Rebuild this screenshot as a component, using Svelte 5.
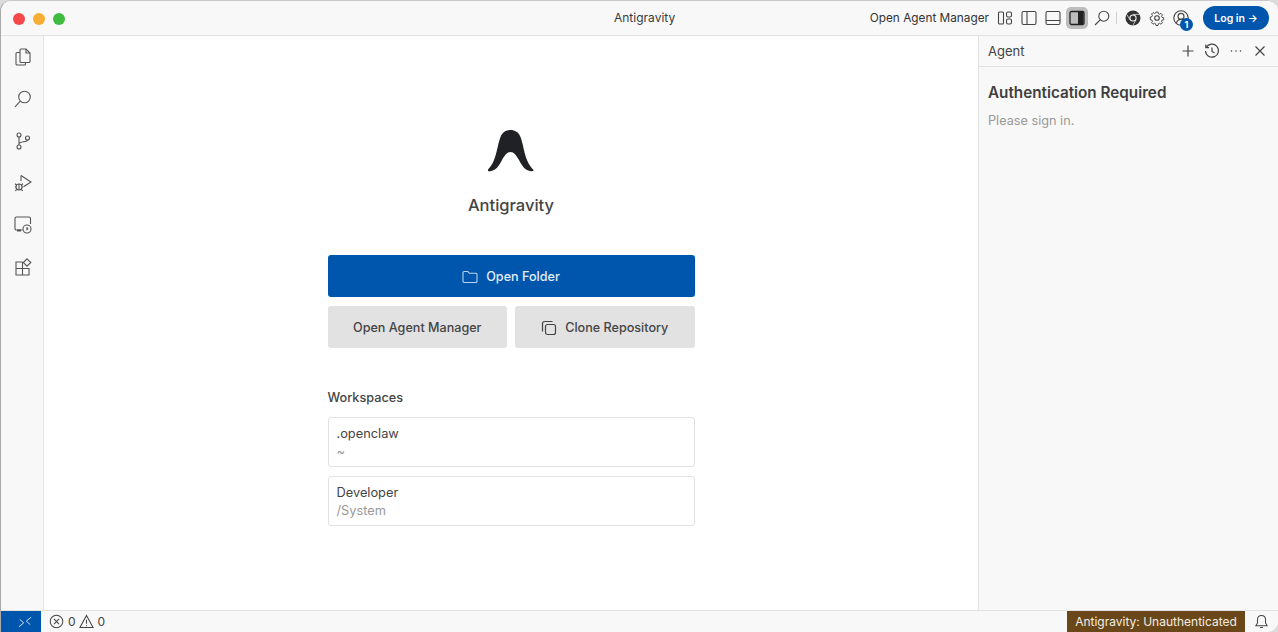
<script lang="ts">
	const workspaces = [
		{ name: '.openclaw', path: '~' },
		{ name: 'Developer', path: '/System' }
	];
</script>

<div class="window">
	<header class="titlebar">
		<div class="lights">
			<span class="light red"></span>
			<span class="light amber"></span>
			<span class="light green"></span>
		</div>
		<div class="title">Antigravity</div>
		<div class="title-actions">
			<span class="manager-link">Open Agent Manager</span>
			<svg class="tb first" viewBox="0 0 16 16"><rect x="1.5" y="2" width="5" height="12" rx="1" /><rect x="9.5" y="2" width="5" height="5" rx="1.5" /><rect x="9.5" y="9" width="5" height="5" rx="1.5" /></svg>
			<svg class="tb" viewBox="0 0 16 16"><rect x="1" y="1.5" width="14" height="13" rx="1.5" /><path d="M6 1.5v13" /></svg>
			<svg class="tb" viewBox="0 0 16 16"><rect x="1" y="1.5" width="14" height="13" rx="1.5" /><path d="M1 10.5h14" /></svg>
			<span class="tb-active">
				<svg class="tb-plain" viewBox="0 0 16 16"><rect x="1" y="1.5" width="14" height="13" rx="1.5" /><path class="solid" d="M9 2h5.5v12H9z" /></svg>
			</span>
			<svg class="tb search" viewBox="0 0 16 16"><circle cx="9.8" cy="6.2" r="5" /><path d="M6.2 9.8 1 15" /></svg>
			<span class="divider"></span>
			<svg class="tb chrome" viewBox="0 0 16 16"><circle class="ink" cx="8" cy="8" r="7.5" /><circle class="hole" cx="8" cy="8" r="3.6" /><circle class="ink" cx="8" cy="8" r="2.5" /><path class="cut" d="M8 4.4h6.6M4.9 9.8 1.6 4.2M11.1 9.8 7.8 15.4" /></svg>
			<svg class="tb gear" viewBox="0 0 16 16"><circle cx="8" cy="8" r="2.3" /><path d="M6.8 1h2.4l.4 2 1.3.6 1.8-1.1 1.7 1.7-1.1 1.8.6 1.3 2 .4v2.4l-2 .4-.6 1.3 1.1 1.8-1.7 1.7-1.8-1.1-1.3.6-.4 2H6.8l-.4-2-1.3-.6-1.8 1.1-1.7-1.7 1.1-1.8-.6-1.3-2-.4V6.8l2-.4.6-1.3-1.1-1.8 1.7-1.7 1.8 1.1 1.3-.6z" transform="translate(1.2 1.2) scale(.85)" /></svg>
			<span class="account">
				<svg class="tb-plain" viewBox="0 0 16 16"><circle cx="8" cy="8" r="7.2" /><circle cx="8" cy="6.4" r="3" /><path d="M3.4 13c.8-2.4 2.5-3.6 4.6-3.6s3.800 1.200 4.600 3.600" /></svg>
				<span class="badge">1</span>
			</span>
			<button class="login">Log in →</button>
		</div>
	</header>

	<div class="workbench">
		<nav class="activity">
			<svg viewBox="0 0 18 18"><path d="M7 1h5l4 4v8.500a1 1 0 0 1-1 1H7a1 1 0 0 1-1-1V2a1 1 0 0 1 1-1z" /><path d="M12 1v4h4" /><path d="M6 4.500H3a1 1 0 0 0-1 1V16a1 1 0 0 0 1 1h7.500a1 1 0 0 0 1-1v-1.500" /></svg>
			<svg viewBox="0 0 18 18"><circle cx="10.500" cy="7" r="5.800" /><path d="M6.300 11.200 1 16.800" /></svg>
			<svg viewBox="0 0 18 18"><circle cx="5" cy="3" r="2" /><circle cx="5" cy="15" r="2" /><circle cx="13.500" cy="6" r="2" /><path d="M5 5v8M5 12c0-3 8.500-1.500 8.500-4" /></svg>
			<svg viewBox="0 0 18 18"><path d="M7 1.500 17 8l-7.500 4.800" /><path d="M7 1.500V7" /><circle cx="5" cy="13" r="3" /><path d="M5 10v6M1 9.800l1.600 1.200M9 9.800 7.400 11M1 13h1M8 13h1M1.200 16.800 2.800 15.300M8.800 16.800 7.200 15.300" /></svg>
			<svg viewBox="0 0 18 18"><path d="M8.500 14H2.500a1.500 1.500 0 0 1-1.500-1.500v-10A1.500 1.500 0 0 1 2.500 1h12.500A1.500 1.500 0 0 1 16.500 2.500V8" /><path class="thick" d="M3 14.500h4" /><circle cx="13" cy="13" r="4" /><path d="M13 11v2.500l1.200-1" /></svg>
			<svg viewBox="0 0 18 18"><path d="M8.500 4H2v13h13v-6.500H2M8.500 4v13" /><path d="m13 .8 3.800 3.700-3.800 3.700-3.700-3.700z" /></svg>
		</nav>

		<main class="welcome">
			<svg class="logo" viewBox="0 0 46 42"><path d="M22.500 0C27 0 30.500 2 32.500 7c2.500 6 3.500 16 6.500 23 1.500 4 4 7.500 6.500 10 .5 1-1.500 1.500-3.500 1-5-1-8-5-11-11-3-5-5-8-8.500-8s-5.500 3-8.500 8c-3 6-6 10-11 11-2 .5-4 0-3.500-1C2 37.500 4.500 34 6 30c3-7 4-17 6.500-23C14.500 2 18 0 22.500 0z" /></svg>
			<h1>Antigravity</h1>

			<div class="actions">
				<button class="btn primary">
					<svg viewBox="0 0 16 16"><path d="M1 3.500A1 1 0 0 1 2 2.500h3.800l1.700 1.800H14a1 1 0 0 1 1 1V12.500a1 1 0 0 1-1 1H2a1 1 0 0 1-1-1z" /></svg>
					Open Folder
				</button>
				<div class="action-row">
					<button class="btn secondary">Open Agent Manager</button>
					<button class="btn secondary">
						<svg viewBox="0 0 16 16"><rect x="4.500" y="4.500" width="10" height="10" rx="2" /><path d="M11.500 1.500H3.500a2 2 0 0 0-2 2v8" /></svg>
						Clone Repository
					</button>
				</div>
			</div>

			<section class="workspaces">
				<h2>Workspaces</h2>
				{#each workspaces as ws}
					<div class="ws-card">
						<div class="ws-name">{ws.name}</div>
						<div class="ws-path">{ws.path}</div>
					</div>
				{/each}
			</section>
		</main>

		<aside class="agent">
			<div class="agent-head">
				<span>Agent</span>
				<div class="agent-tools">
					<svg viewBox="0 0 16 16"><path d="M8 2.500v11M2.500 8h11" /></svg>
					<svg viewBox="0 0 16 16"><path d="M2.300 4.500A6.500 6.500 0 1 1 1.500 8" /><path d="M1.800 1.500v3.200h3.200" /><path d="M8 4.500V8.500l2.600 1.500" /></svg>
					<svg viewBox="0 0 16 16"><path class="dots" d="M3.500 8h.01M8 8h.01M12.500 8h.01" /></svg>
					<svg viewBox="0 0 16 16"><path d="m3.500 3.500 9 9M12.500 3.500l-9 9" /></svg>
				</div>
			</div>
			<div class="agent-body">
				<h3>Authentication Required</h3>
				<p>Please sign in.</p>
			</div>
		</aside>
	</div>

	<footer class="statusbar">
		<div class="remote">
			<svg viewBox="0 0 16 16"><path d="M1 13.500 6.500 9 2 5M15 2.500 9.500 7l4.500 4" /></svg>
		</div>
		<div class="problems">
			<svg viewBox="0 0 16 16"><circle cx="8" cy="8" r="6.700" /><path d="m5.300 5.300 5.400 5.400M10.700 5.300l-5.400 5.400" /></svg>
			<span>0</span>
			<svg viewBox="0 0 16 16"><path d="M8 1.500 15 14.500H1z" /><path d="M8 6v4.500M8 12v1" /></svg>
			<span>0</span>
		</div>
		<div class="status-right">
			<span class="auth">Antigravity: Unauthenticated</span>
			<svg class="bell" viewBox="0 0 16 16"><path d="M8 1.500c-2.800 0-4.300 2-4.300 4.500v3.500L2 12.500h12l-1.700-3V6c0-2.500-1.500-4.500-4.300-4.500z" /><path d="M6.500 14.500h3" /></svg>
		</div>
	</footer>
</div>

<style>
	:global(body) {
		margin: 0;
		background: #dcdcdc;
		font-family: Inter, 'Liberation Sans', sans-serif;
		overflow: hidden;
	}

	svg {
		fill: none;
		stroke: #444;
		stroke-width: 1.1;
		display: block;
		flex-shrink: 0;
	}

	.window {
		width: 1278px;
		height: 632px;
		box-sizing: border-box;
		border-left: 1px solid #aaa;
		border-top: 1px solid #c8c8c8;
		border-radius: 11px 11px 11px 0;
		background: #fff;
		display: flex;
		flex-direction: column;
		overflow: hidden;
		color: #333;
	}

	.titlebar {
		height: 34px;
		flex-shrink: 0;
		background: #f8f8f8;
		border-bottom: 1px solid #e2e2e2;
		display: flex;
		align-items: center;
		position: relative;
	}

	.lights {
		display: flex;
		gap: 8px;
		padding-left: 12px;
		padding-top: 1px;
	}

	.light {
		width: 12px;
		height: 12px;
		border-radius: 50%;
	}

	.red { background: #f4484a; }
	.amber { background: #f8ae33; }
	.green { background: #3fbb3f; }

	.title {
		position: absolute;
		left: 613px;
		top: 9px;
		font-size: 12px;
		line-height: 16px;
		color: #3a3a3a;
	}

	.title-actions {
		margin-left: auto;
		display: flex;
		align-items: center;
		padding-right: 9px;
	}

	.manager-link {
		font-size: 11.8px;
		color: #333;
		margin-right: 8px;
	}

	.tb {
		width: 16px;
		height: 16px;
		margin-right: 8px;
	}

	.tb.search {
		margin-left: 6px;
		margin-right: 6px;
	}

	.tb-plain {
		width: 16px;
		height: 16px;
	}

	.tb-active {
		width: 22px;
		height: 22px;
		background: #bdbdbd;
		border-radius: 5px;
		display: flex;
		align-items: center;
		justify-content: center;
		margin-left: -3px;
	}

	.tb-active svg {
		stroke: #222;
		stroke-width: 1.3;
	}

	.solid {
		fill: #222;
		stroke: none;
	}

	.divider {
		width: 1px;
		height: 12px;
		background: #cfcfcf;
		margin-right: 8px;
	}

	.chrome .ink {
		fill: #333;
		stroke: none;
	}

	.chrome .hole {
		fill: #f8f8f8;
		stroke: none;
	}

	.chrome .cut {
		stroke: #f8f8f8;
		stroke-width: 0.7;
	}

	.chrome {
		margin-right: 8px;
	}

	.account {
		position: relative;
		width: 16px;
		height: 16px;
		margin-right: 14px;
	}

	.badge {
		position: absolute;
		right: -4px;
		bottom: -5px;
		width: 13px;
		height: 13px;
		border-radius: 50%;
		background: #0056ac;
		color: #fff;
		font-size: 9px;
		font-weight: 700;
		line-height: 13px;
		text-align: center;
	}

	.login {
		width: 66px;
		height: 24px;
		padding: 0;
		border: none;
		border-radius: 12px;
		background: #0056ac;
		color: #fff;
		font: 600 10.500px Inter, 'Liberation Sans', sans-serif;
	}

	.workbench {
		flex: 1;
		display: flex;
		min-height: 0;
	}

	.activity {
		width: 41px;
		flex-shrink: 0;
		background: #f8f8f8;
		border-right: 1px solid #e6e6e6;
		display: flex;
		flex-direction: column;
		align-items: center;
		gap: 24px;
		padding: 12px 0 0 1px;
		box-sizing: content-box;
	}

	.activity svg {
		width: 18px;
		height: 18px;
		stroke: #555;
	}

	.thick {
		stroke-width: 2;
	}

	.welcome {
		flex: 1;
		min-width: 0;
		display: flex;
		flex-direction: column;
		align-items: center;
		padding-top: 94px;
	}

	.logo {
		width: 46px;
		height: 42px;
		fill: #202124;
		stroke: none;
	}

	h1 {
		margin: 21px 0 0;
		font-size: 16.500px;
		line-height: 24px;
		font-weight: 450;
		color: #444;
	}

	.actions {
		width: 367px;
		margin-top: 38px;
		display: flex;
		flex-direction: column;
		gap: 9px;
	}

	.action-row {
		display: flex;
		gap: 8px;
	}

	.btn {
		flex: 1;
		padding: 1px 0 0;
		border: none;
		border-radius: 3px;
		display: flex;
		align-items: center;
		justify-content: center;
		gap: 8px;
		font: 450 12.600px Inter, 'Liberation Sans', sans-serif;
	}

	.btn.primary {
		height: 42px;
		flex: none;
		background: #0056ac;
		color: #e3edf7;
	}

	.btn.primary svg {
		width: 16px;
		height: 16px;
		stroke: #b9d3ea;
	}

	.btn.secondary {
		height: 42px;
		background: #e2e2e2;
		color: #444;
	}

	.btn.secondary svg {
		width: 16px;
		height: 16px;
		stroke: #444;
		stroke-width: 1.2;
	}

	.workspaces {
		width: 367px;
		margin-top: 41px;
	}

	h2 {
		margin: 0 0 11px;
		font-size: 12.700px;
		line-height: 17px;
		font-weight: 500;
		color: #444;
	}

	.ws-card {
		box-sizing: border-box;
		height: 50px;
		margin-bottom: 9px;
		padding: 8px 8px 0;
		border: 1px solid #e2e2e2;
		border-radius: 3px;
		background: #fff;
	}

	.ws-name {
		font-size: 12.800px;
		line-height: 16px;
		color: #444;
	}

	.ws-path {
		margin-top: 2px;
		font-size: 12.800px;
		line-height: 16px;
		color: #999;
	}

	.agent {
		width: 299px;
		flex-shrink: 0;
		background: #f8f8f8;
		border-left: 1px solid #e2e2e2;
	}

	.agent-head {
		height: 30px;
		box-sizing: content-box;
		display: flex;
		align-items: center;
		justify-content: space-between;
		padding: 0 10px 0 9px;
		border-bottom: 1px solid #e2e2e2;
		font-size: 13px;
		line-height: 32px;
		color: #444;
	}

	.agent-tools {
		display: flex;
		gap: 8px;
	}

	.agent-tools svg {
		width: 16px;
		height: 16px;
		stroke: #444;
		stroke-width: 1.2;
	}

	.dots {
		stroke-width: 1.6;
		stroke-linecap: round;
	}

	.agent-body {
		padding: 15px 9px;
	}

	h3 {
		margin: 0;
		font-size: 15.250px;
		line-height: 22px;
		font-weight: 600;
		color: #3f3f3f;
	}

	.agent-body p {
		margin: 9px 0 0;
		font-size: 12.700px;
		line-height: 16px;
		color: #999;
	}

	.statusbar {
		height: 22px;
		flex-shrink: 0;
		background: #f8f8f8;
		border-top: 1px solid #e2e2e2;
		box-sizing: border-box;
		display: flex;
		align-items: stretch;
		font-size: 12px;
		color: #444;
	}

	.remote {
		width: 40px;
		box-sizing: border-box;
		padding-left: 8px;
		background: #0056ac;
		display: flex;
		align-items: center;
		justify-content: center;
	}

	.remote svg {
		width: 14px;
		height: 14px;
		stroke: #d5e4f3;
	}

	.problems {
		display: flex;
		align-items: center;
		gap: 4px;
		padding-left: 8px;
	}

	.problems svg {
		width: 15px;
		height: 15px;
	}

	.problems span + svg {
		margin-left: -1px;
	}

	.status-right {
		margin-left: auto;
		display: flex;
		align-items: stretch;
	}

	.auth {
		width: 178px;
		background: #6a4718;
		color: #f2ede4;
		display: flex;
		align-items: center;
		justify-content: center;
		white-space: nowrap;
	}

	.bell {
		width: 15px;
		height: 15px;
		align-self: center;
		margin: 0 9px;
	}
</style>
